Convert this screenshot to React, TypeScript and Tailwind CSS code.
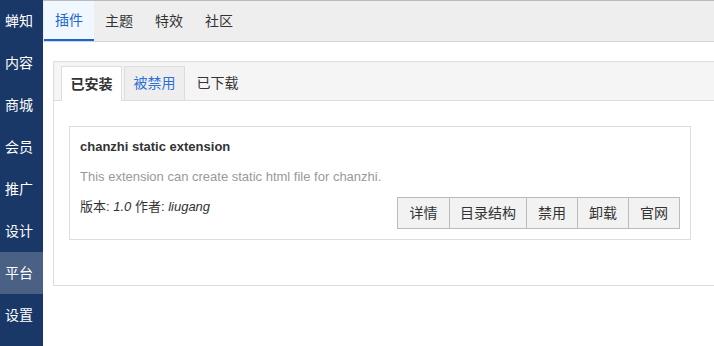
const sideItems = ["蝉知", "内容", "商城", "会员", "推广", "设计", "平台", "设置"];
const navTabs = ["插件", "主题", "特效", "社区"];
const actions = [
  { label: "详情", w: "w-[51px]" },
  { label: "目录结构", w: "w-[77px]" },
  { label: "禁用", w: "w-[51px]" },
  { label: "卸载", w: "w-[51px]" },
  { label: "官网", w: "w-[51px]" },
];

export default function App() {
  return (
    <div className="flex h-[346px] w-[714px] overflow-hidden bg-white font-['Liberation_Sans','Noto_Sans_CJK_SC',sans-serif] text-[13px] text-[#333]">
      {/* Sidebar */}
      <div className="flex w-[43px] shrink-0 flex-col bg-[#1a3867]">
        {sideItems.map((item) => (
          <div
            key={item}
            className={
              "flex h-[42px] items-center pl-[5px] text-[14px] text-white " +
              (item === "平台" ? "bg-[#4a6085]" : "")
            }
          >
            {item}
          </div>
        ))}
      </div>

      <div className="flex min-w-0 flex-1 flex-col">
        {/* Top nav */}
        <div className="flex h-[42px] border-t border-b border-t-[#bbb] border-b-[#d5d5d5] bg-[#eee] pl-px">
          {navTabs.map((tab, i) => (
            <div
              key={tab}
              className={
                "flex h-full items-center px-[11px] text-[14px] " +
                (i === 0
                  ? "border-b-2 border-[#1a66d0] bg-[#f0f7fe] text-[#1a66d0]"
                  : "text-[#333]")
              }
            >
              {tab}
            </div>
          ))}
        </div>

        {/* Panel */}
        <div className="mt-[19px] ml-[10px] w-[700px] shrink-0 border border-[#ddd]">
          <div className="flex h-[39px] items-end gap-[2px] border-b border-[#ddd] bg-[#f5f5f5] pl-[7px]">
            <div className="-mb-px flex h-[35px] w-[61px] items-center justify-center border border-b-0 border-[#ddd] bg-white text-[14px] font-bold text-[#333]">
              已安装
            </div>
            <div className="flex h-[34px] w-[61px] items-center justify-center border border-b-0 border-[#ddd] bg-[#eee] text-[14px] text-[#2e6fd6]">
              被禁用
            </div>
            <div className="flex h-[34px] w-[61px] items-center justify-center text-[14px] text-[#333]">
              已下载
            </div>
          </div>

          <div className="px-[15px] pt-[25px] pb-[45px]">
            <div className="w-[622px] border border-[#ddd] p-[10px]">
              <div className="h-5 text-[13px] leading-5 font-bold text-[#333]">
                chanzhi static extension
              </div>
              <div className="mt-[10px] h-5 leading-5 text-[#999]">
                This extension can create static html file for chanzhi.
              </div>
              <div className="mt-[10px] flex items-start justify-between">
                <div className="leading-5 text-[#333]">
                  版本: <em>1.0</em> 作者: <em>liugang</em>
                </div>
                <div className="flex h-[32px] border border-[#bbb] bg-[#f2f2f2]">
                  {actions.map((a, i) => (
                    <div
                      key={a.label}
                      className={
                        "flex h-full items-center justify-center text-[14px] text-[#333] " +
                        a.w +
                        (i > 0 ? " border-l border-[#bbb]" : "")
                      }
                    >
                      {a.label}
                    </div>
                  ))}
                </div>
              </div>
            </div>
          </div>
        </div>
      </div>
    </div>
  );
}
